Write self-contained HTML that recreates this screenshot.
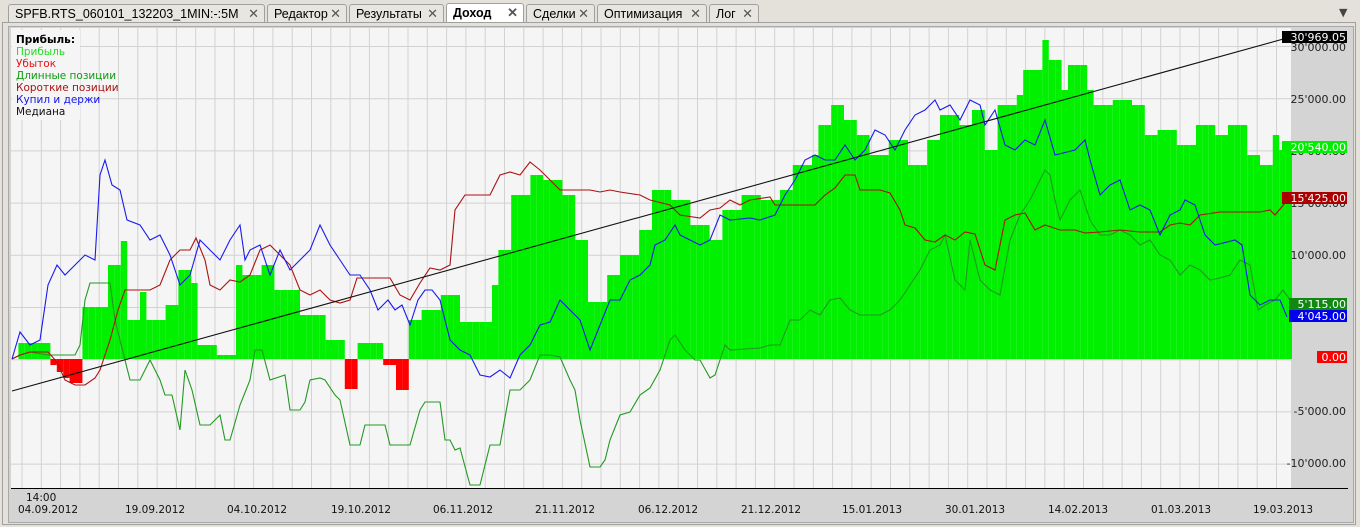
<!DOCTYPE html>
<html><head><meta charset="utf-8"><style>
body{margin:0;width:1360px;height:527px;overflow:hidden;background:#e4e1da;font-family:"DejaVu Sans","Liberation Sans",sans-serif;}
.tab{position:absolute;top:4px;height:18px;border:1px solid #a0a0a0;border-bottom:none;background:#e8e6e0;font-family:"Liberation Sans",sans-serif;font-size:12.5px;line-height:18px;padding-left:6px;box-sizing:border-box;color:#000;border-radius:3px 3px 0 0}
.tab span{position:absolute;right:5px;top:0;color:#555;font-size:13px}
.act{background:#fff;font-weight:bold;top:3px;height:20px}
</style></head><body>
<div class="tab" style="left:8px;width:257px">SPFB.RTS_060101_132203_1MIN:-:5M<span>✕</span></div>
<div class="tab" style="left:267px;width:80px">Редактор<span>✕</span></div>
<div class="tab" style="left:349px;width:95px">Результаты<span>✕</span></div>
<div class="tab act" style="left:446px;width:78px">Доход<span>✕</span></div>
<div class="tab" style="left:526px;width:69px">Сделки<span>✕</span></div>
<div class="tab" style="left:597px;width:110px">Оптимизация<span>✕</span></div>
<div class="tab" style="left:709px;width:50px">Лог<span>✕</span></div>
<div style="position:absolute;left:1339px;top:6px;font-size:11px;color:#444">▼</div>
<div style="position:absolute;left:2px;top:22px;width:1354px;height:503px;border:1px solid #a0a0a0;box-sizing:border-box;background:#e4e1da"></div>
<div style="position:absolute;left:8px;top:26px;width:1346px;height:497px;border:1px solid #a8a8a8;box-sizing:border-box;background:#d4d4d4"></div>
<svg id="s" width="1360" height="527" style="position:absolute;left:0;top:0" font-family="DejaVu Sans, Liberation Sans, sans-serif"></svg>
<script>
var s=document.getElementById('s'),h='';
h+='<rect x="11" y="28" width="1280" height="460" fill="#f5f5f5"/>';
for(var x=22;x<1291;x+=19.3)h+='<line x1="'+x.toFixed(1)+'" y1="28" x2="'+x.toFixed(1)+'" y2="488" stroke="#d2d2d2"/>';
for(var y=46.5;y<488;y+=52.2)h+='<line x1="11" y1="'+y.toFixed(1)+'" x2="1291" y2="'+y.toFixed(1)+'" stroke="#d2d2d2"/>';
var seg=[[20,359],[48,343],[55,365],[62,372],[70,378],[85,383],[110,307],[118,265],[125,241],[140,320],[145,292],[165,320],[178,305],[190,270],[200,283],[215,345],[235,355],[245,265],[260,275],[275,265],[300,290],[325,315],[345,340],[355,389],[360,363],[385,343],[395,365],[410,390],[420,320],[440,310],[460,295],[490,322],[500,285],[510,250],[530,195],[545,175],[560,180],[575,195],[585,240],[610,302],[620,275],[640,255],[650,230],[670,190],[690,200],[710,225],[720,240],[740,210],[760,195],[780,200],[795,190],[810,165],[820,155],[830,125],[845,105],[855,120],[870,135],[890,155],[910,140],[930,165],[940,140],[960,115],[975,125],[985,110],[1000,150],[1015,105],[1025,95],[1040,70],[1050,40],[1060,60],[1070,90],[1085,65],[1095,90],[1110,105],[1130,100],[1145,105],[1160,135],[1175,130],[1195,145],[1215,125],[1230,135],[1250,125],[1260,155],[1270,165],[1280,135],[1290,150]];
for(var i=0;i<200;i++){var bx=12+i*6.4,c=bx+3.2,v=359;for(var j=0;j<seg.length;j++){if(c<seg[j][0]){v=seg[j][1];break;}}
if(bx>1287)break;
if(v<359)h+='<rect x="'+bx.toFixed(1)+'" y="'+v+'" width="6.4" height="'+(359-v)+'" fill="#00f000"/>';
else if(v>359)h+='<rect x="'+bx.toFixed(1)+'" y="359" width="6.4" height="'+(v-359)+'" fill="#ff0000"/>';}
function pl(p,c){h+='<polyline fill="none" stroke="'+c+'" stroke-width="1.1" points="'+p+'"/>';}
pl("12,359 20,355 30,352 48,355 75,355 80,345 85,300 90,283 110,283 115,320 125,360 130,380 140,380 150,360 160,380 165,395 172,395 180,430 185,370 192,390 200,425 210,425 220,415 225,440 230,440 240,405 250,380 255,350 262,350 270,380 285,375 290,410 300,410 305,402 310,380 320,378 325,380 335,395 340,400 350,445 360,445 365,425 385,425 390,445 410,445 420,410 425,402 440,402 445,440 450,440 455,450 460,448 470,485 480,485 485,465 490,445 500,445 510,390 520,390 530,380 540,355 550,355 560,357 570,380 575,390 580,420 590,467 600,467 605,460 610,440 620,415 630,412 640,395 650,388 660,370 670,340 675,335 685,350 695,360 700,360 710,378 715,375 720,360 725,345 730,350 760,348 770,345 780,345 790,320 800,320 810,310 820,315 830,300 840,298 850,310 860,315 880,315 890,310 900,300 910,285 920,270 930,250 940,245 945,235 955,280 965,290 970,240 980,280 990,290 1000,295 1010,240 1020,215 1030,200 1040,180 1045,170 1050,175 1055,200 1060,220 1070,200 1080,190 1090,220 1100,235 1110,235 1120,230 1130,235 1140,245 1150,240 1160,255 1170,260 1180,275 1190,265 1200,270 1210,280 1220,278 1230,275 1240,260 1250,265 1258,310 1265,305 1275,300 1283,290 1290,300","#229922");
pl("12,359 20,355 30,352 48,352 57,362 65,380 75,385 85,385 95,378 100,370 105,355 110,340 118,310 125,290 150,290 160,285 170,260 180,250 190,250 196,238 205,260 210,285 220,290 230,280 240,282 250,275 260,250 270,245 280,255 290,265 300,290 310,295 320,290 330,300 340,303 350,300 357,278 390,278 400,295 410,300 420,283 430,268 440,270 450,265 455,210 465,195 490,195 500,175 510,172 520,175 530,162 540,170 550,180 560,190 590,190 600,192 610,190 620,192 640,195 650,200 670,205 680,215 700,218 710,210 720,208 730,200 740,205 750,200 770,197 775,205 815,205 825,195 835,188 845,175 855,175 860,190 880,190 890,193 900,210 905,225 915,228 925,240 935,242 945,235 955,240 965,232 975,234 985,265 995,270 1005,220 1015,215 1025,213 1035,230 1045,225 1060,230 1075,230 1085,233 1100,232 1120,230 1140,232 1160,232 1170,225 1180,223 1190,225 1200,215 1220,212 1260,212 1270,210 1275,215 1285,203 1290,198","#aa1111");
pl("12,359 20,332 30,345 40,340 48,285 57,265 65,275 75,265 85,255 95,260 100,175 105,160 112,185 120,190 127,220 140,225 150,240 160,235 170,255 180,285 190,275 200,240 210,250 220,260 230,240 240,225 245,260 250,250 260,245 270,275 280,250 290,270 300,260 310,250 320,225 330,245 340,260 350,275 360,275 370,290 378,310 388,300 395,310 402,305 410,325 418,300 425,290 432,290 440,300 450,340 460,350 470,355 480,375 490,377 500,370 510,378 520,355 530,345 540,325 550,322 560,300 570,310 580,320 590,350 600,325 610,300 620,300 630,280 640,275 650,265 655,245 665,240 675,225 680,235 690,240 700,245 710,240 720,215 730,220 750,218 760,220 775,215 785,195 795,180 805,160 815,155 825,160 835,160 845,145 855,160 865,150 875,130 885,135 895,150 905,130 915,115 925,110 935,100 940,110 950,105 960,120 970,100 980,105 985,125 995,110 1005,145 1015,150 1025,140 1035,145 1045,120 1055,155 1075,150 1085,140 1090,160 1100,195 1110,185 1120,180 1130,210 1140,205 1150,210 1160,235 1170,215 1180,210 1185,200 1195,205 1205,235 1215,245 1235,240 1242,245 1250,295 1260,305 1270,300 1280,300 1287,317","#1a1aee");
h+='<line x1="12" y1="391" x2="1287" y2="38" stroke="#111" stroke-width="1.1"/>';
h+='<line x1="11" y1="488.5" x2="1348" y2="488.5" stroke="#000"/>';
var lg=[["Прибыль:","#000",1],["Прибыль","#22dd22"],["Убыток","#ee1111"],["Длинные позиции","#119911"],["Короткие позиции","#aa1111"],["Купил и держи","#1111ee"],["Медиана","#111"]];
h+='<rect x="12" y="30" width="68" height="90" fill="#f5f5f5"/>';
lg.forEach(function(l,k){h+='<text x="16" y="'+(43+k*12)+'" font-size="10.5" fill="'+l[1]+'"'+(l[2]?' font-weight="bold"':'')+'>'+l[0]+'</text>';});
var ax=[[47,"30'000.00"],[99,"25'000.00"],[151,"20'000.00"],[203,"15'000.00"],[255,"10'000.00"],[411,"-5'000.00"],[463,"-10'000.00"]];
ax.forEach(function(a){h+='<text x="1346" y="'+(a[0]+4)+'" font-size="11" text-anchor="end" fill="#222">'+a[1]+'</text>';});
var bx=[[37,"30'969.05","#000"],[147,"20'540.00","#00ee00"],[198,"15'425.00","#aa0000"],[304,"5'115.00","#118811"],[316,"4'045.00","#0000ee"],[357,"0.00","#ff0000"]];
bx.forEach(function(b){var w=b[1].length*7+2;h+='<rect x="'+(1347-w)+'" y="'+(b[0]-6)+'" width="'+w+'" height="12" fill="'+b[2]+'"/><text x="1346" y="'+(b[0]+4)+'" font-size="11" text-anchor="end" fill="#fff">'+b[1]+'</text>';});
var d=[[48,"04.09.2012"],[155,"19.09.2012"],[257,"04.10.2012"],[361,"19.10.2012"],[463,"06.11.2012"],[565,"21.11.2012"],[668,"06.12.2012"],[771,"21.12.2012"],[872,"15.01.2013"],[975,"30.01.2013"],[1078,"14.02.2013"],[1181,"01.03.2013"],[1283,"19.03.2013"]];
d.forEach(function(a){h+='<text x="'+a[0]+'" y="513" font-size="10.5" text-anchor="middle" fill="#111">'+a[1]+'</text>';});
h+='<text x="26" y="501" font-size="10.5" fill="#111">14:00</text>';
s.innerHTML=h;
</script>
</body></html>
